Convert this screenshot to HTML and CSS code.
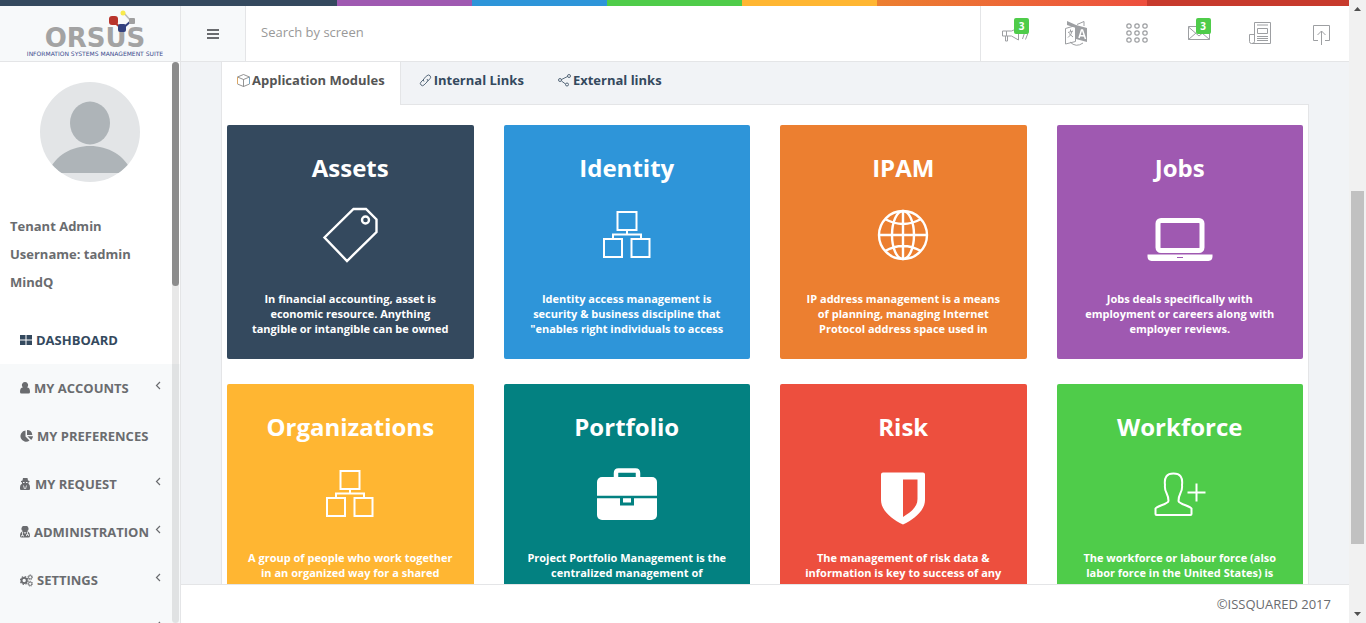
FILE: index.html
```html
<!DOCTYPE html>
<html lang="en">
<head>
<meta charset="utf-8">
<title>Orsus Dashboard</title>
<link rel="stylesheet" href="styles.css">
</head>
<body>
<svg class="defs" aria-hidden="true">
  <symbol id="i-sitemap" viewBox="0 0 50 50"><g fill="none" stroke="currentColor" stroke-width="2"><rect x="15.500" y="2" width="19" height="18"/><rect x="2" y="29" width="18" height="18"/><rect x="29.500" y="29" width="18" height="18"/><path d="M25 20v5M11 29v-4.500h28V29"/></g></symbol>
  <symbol id="i-chevron" viewBox="0 0 6 10"><path d="M5 1L1.500 4.500L5 8" fill="none" stroke="currentColor" stroke-width="1.200"/></symbol>
</svg>
<div class="app">
  <div class="strip"></div>
  <header class="header">
    <a class="logo" href="#" aria-label="Orsus">
      <svg width="148" height="50" viewBox="0 0 148 50">
        <text class="logo-name" x="75" y="38" text-anchor="middle">ORSUS</text>
        <text class="logo-tag" x="75" y="47" text-anchor="middle">INFORMATION SYSTEMS MANAGEMENT SUITE</text>
        <path d="M93 12l9 8" fill="none" stroke="#b9342c" stroke-width="2"/>
        <path d="M102 20l9-8" fill="none" stroke="#33417f" stroke-width="2"/>
        <path d="M103 3l8 9" stroke="#bbb" stroke-width="1.500"/>
        <rect x="89" y="7" width="9" height="9" rx="3" fill="#b9342c"/>
        <rect x="98" y="15" width="8" height="8" rx="2" fill="#33417f"/>
        <rect x="109" y="9" width="6" height="6" rx="1" fill="#a0a0a0"/>
        <circle cx="103" cy="4" r="2.500" fill="#f8ea4c"/>
      </svg>
    </a>
    <button class="menu-toggle" aria-label="Toggle menu">
      <svg width="12" height="10" viewBox="0 0 12 10"><path d="M0 1h12M0 5h12M0 9h12" stroke="currentColor" stroke-width="2"/></svg>
    </button>
    <input class="search" type="text" placeholder="Search by screen" aria-label="Search by screen">
    <nav class="tools">
      <button class="tool" aria-label="Announcements">
        <svg viewBox="0 0 26 26"><g fill="none" stroke="currentColor"><path d="M.5 11h4v5h-4zM4.500 11l5 0 7-3v12l-7-4h-5M3.500 16v5h2v-5M20.500 19l2-6M23.500 19.500l2.500-6.500"/></g></svg>
        <span class="badge">3</span>
      </button>
      <button class="tool" aria-label="Language">
        <svg viewBox="0 0 26 26"><path d="M4 1l9 4v3L4 5zM13 5l11 3v14l-11-3z" fill="currentColor"/><path d="M14 4.500l7-3V6M2.500 8.500l10-3v16l-10 2.500zM7 22q6 6 13 1M5 12.500l5-1.500M7.500 9.500v2M9 11.500q-1 4-4 6M6 13.500l4 3.500" fill="none" stroke="currentColor"/><path d="M16 18l2.500-8h1l3 9M17 15.500l4 .5" fill="none" stroke="#fff" stroke-width="1.500"/></svg>
      </button>
      <button class="tool" aria-label="Apps">
        <svg viewBox="0 0 26 26"><g fill="none" stroke="currentColor" stroke-width="1.200"><circle cx="5" cy="6" r="2.200"/><circle cx="13" cy="6" r="2.200"/><circle cx="21" cy="6" r="2.200"/><circle cx="5" cy="13" r="2.200"/><circle cx="13" cy="13" r="2.200"/><circle cx="21" cy="13" r="2.200"/><circle cx="5" cy="20" r="2.200"/><circle cx="13" cy="20" r="2.200"/><circle cx="21" cy="20" r="2.200"/></g></svg>
      </button>
      <button class="tool tool-mail" aria-label="Messages">
        <svg viewBox="0 0 26 26"><path d="M2.500 6.500h21v13h-21zM2.500 7l10.500 9 10.500-9M2.500 19.500l7.500-6.500M23.500 19.500L16 13" fill="none" stroke="currentColor"/></svg>
        <span class="badge">3</span>
      </button>
      <button class="tool" aria-label="News">
        <svg viewBox="0 0 26 26"><path d="M7.500 2.500h16v21h-19q-2 0-2-2v-7h5zM7.500 14v7.500q0 2-2.500 2M10.500 8.500h10v5h-10zM10 5h11M10 16.500h11M10 18.500h11M10 20.500h11" fill="none" stroke="currentColor"/></svg>
      </button>
      <button class="tool" aria-label="Log out">
        <svg viewBox="0 0 26 26"><path d="M10 20.500H5.500v-15h16v15H17M13.500 25V11M9.500 15l4-4 4 4" fill="none" stroke="currentColor"/></svg>
      </button>
    </nav>
  </header>
  <div class="body">
    <aside class="sidebar">
      <div class="sidebar-content">
        <section class="profile">
          <svg class="avatar" viewBox="0 0 100 100"><defs><clipPath id="round"><circle cx="50" cy="50" r="50"/></clipPath></defs><g clip-path="url(#round)"><path d="M0 0h100v100H0z" fill="#e3e5e7"/><ellipse cx="50" cy="41" rx="20" ry="21.500" fill="#aeb4b8"/><path d="M8 91C15 73 32 64 50 64s35 9 42 27z" fill="#aeb4b8"/></g></svg>
          <p>Tenant Admin</p>
          <p>Username: tadmin</p>
          <p>MindQ</p>
        </section>
        <ul class="menu">
          <li class="active"><a href="#"><svg width="12" height="10" viewBox="0 0 12 10"><path d="M0 0h5.500v4.500H0zM6.500 0H12v4.500H6.500zM0 5.500h5.500V10H0zM6.500 5.500H12V10H6.500z" fill="currentColor"/></svg>DASHBOARD</a></li>
          <li><a href="#"><svg width="10" height="12" viewBox="0 0 10 12"><path d="M5 0a3 3 0 0 1 2 5.300C9 5.500 10 7 10 10q0 1.500-1.500 1.500h-7Q0 11.500 0 10C0 7 1 5.500 3 5.300A3 3 0 0 1 5 0z" fill="currentColor"/></svg>MY ACCOUNTS<svg class="arrow"><use href="#i-chevron"/></svg></a></li>
          <li><a href="#"><svg width="13" height="12" viewBox="0 0 13 12"><path d="M5.500.5v6l4 4A5.600 5.600 0 1 1 5.500.5zM7 0a5.500 5.500 0 0 1 5.300 5H7zM7.500 6.200H13a6 6 0 0 1-1.800 3.800z" fill="currentColor"/></svg>MY PREFERENCES</a></li>
          <li><a href="#"><svg width="11" height="12" viewBox="0 0 11 12"><path d="M3 0h4.500l.5 2.500 1.500.5v1L8.500 4.500v1.200Q10 6.500 10 9v2q0 1-1 1H1q-1 0-1-1V9q0-2.500 2-3.300V4.500L1 4V3l1.500-.5z" fill="currentColor"/><path d="M3 4.500h1.500M6 4.500h1.500" stroke="#f7f9fa"/><path d="M3.500 7.500l1 3.500M6.500 7.500l-1 3.500" stroke="#f7f9fa" stroke-width=".8"/></svg>MY REQUEST<svg class="arrow"><use href="#i-chevron"/></svg></a></li>
          <li><a href="#"><svg width="10" height="12" viewBox="0 0 10 12"><path d="M5 0a2.800 2.800 0 0 1 2 5.200C9 5.500 10 7 10 10q0 1.500-1.500 1.500h-7Q0 11.500 0 10C0 7 1 5.500 3 5.200A2.800 2.800 0 0 1 5 0z" fill="currentColor"/><path d="M2.500 6v3M1.500 10.500V9.500h2v1M4 6l1 1.500L6 6M7.500 6v2M6.500 10V8.500h2V10" fill="none" stroke="#f7f9fa" stroke-width=".8"/></svg>ADMINISTRATION<svg class="arrow"><use href="#i-chevron"/></svg></a></li>
          <li><a href="#"><svg width="13" height="13" viewBox="0 0 14 13"><g fill="none" stroke="currentColor"><circle cx="4.500" cy="6.500" r="2.800" stroke-width="2"/><circle cx="4.500" cy="6.500" r="4.200" stroke-width="1.200" stroke-dasharray="1.650"/><circle cx="11" cy="3" r="1.800"/><circle cx="11" cy="3" r="2.600" stroke-dasharray="1"/><circle cx="11" cy="10" r="1.800"/><circle cx="11" cy="10" r="2.600" stroke-dasharray="1"/></g></svg>SETTINGS<svg class="arrow"><use href="#i-chevron"/></svg></a></li>
          <li><a href="#" aria-label="More"><svg width="12" height="12" viewBox="0 0 12 12"><circle cx="6" cy="6" r="5" fill="currentColor"/></svg><svg class="arrow"><use href="#i-chevron"/></svg></a></li>
        </ul>
      </div>
      <div class="rail"><div class="rail-thumb"></div></div>
    </aside>
    <main class="main">
      <div class="content">
        <div class="tabs" role="tablist">
          <button class="tab selected" role="tab" aria-selected="true"><svg viewBox="0 0 13 13"><path d="M.5 3L6.500.5l6 2.500v7l-6 2.500-6-2.500zM.5 3l6 2.500 6-2.500M6.500 5.500v7" fill="none" stroke="#777" stroke-width=".8"/><path d="M.5 3v7" stroke="#dba765"/><path d="M12.500 10V3" fill="none" stroke="#7aa6c0"/></svg>Application Modules</button>
          <button class="tab" role="tab"><svg viewBox="0 0 13 13"><path d="M5 7.500Q3.500 6 5 4.500L8 1.700q1.500-1.500 3 0t0 3L8.500 7.300M8 5q1.500 1.500 0 3l-3 3q-1.500 1.500-3 0T2 8l2.500-2.500" fill="none" stroke="currentColor" stroke-width=".8"/></svg>Internal Links</button>
          <button class="tab" role="tab"><svg viewBox="0 0 13 13"><g fill="none" stroke="currentColor" stroke-width=".8"><circle cx="2" cy="6" r="1.500"/><circle cx="11" cy="2" r="1.500"/><circle cx="9" cy="10.500" r="1.500"/><path d="M3.500 5.500L9.500 2.500M3.500 7l4 3"/></g></svg>External links</button>
        </div>
        <section class="panel">
          <article class="card navy"><h2>Assets</h2>
            <svg class="icon" viewBox="0 0 70 70"><g fill="none" stroke="#fff" stroke-width="2.400"><path d="M38.500 8H51l10.500 10.500V31L32 60 9.500 36.500z"/><circle cx="50.500" cy="19" r="3.500"/></g></svg>
            <p>In financial accounting, asset is economic resource. Anything tangible or intangible can be owned</p></article>
          <article class="card blue"><h2>Identity</h2><svg class="icon small"><use href="#i-sitemap"/></svg>
            <p>Identity access management is security &amp; business discipline that "enables right individuals to access</p></article>
          <article class="card orange"><h2>IPAM</h2>
            <svg class="icon" viewBox="0 0 70 70"><g fill="none" stroke="#fff" stroke-width="2.400"><circle cx="35" cy="34" r="24"/><ellipse cx="35" cy="34" rx="11" ry="24"/><path d="M35 10v48M11 34h48M17 18q18 10 36 0M17 50q18-10 36 0"/></g></svg>
            <p>IP address management is a means of planning, managing Internet Protocol address space used in</p></article>
          <article class="card purple"><h2>Jobs</h2>
            <svg class="icon" viewBox="0 0 70 70"><rect x="13" y="19.500" width="44" height="30" rx="3" fill="none" stroke="#fff" stroke-width="5"/><path d="M2.500 53.500h65v2q0 4-4 4.500H6.500q-4-.5-4-4.500z" fill="#fff"/><path d="M32 56.500h6" stroke="#9f59b1"/></svg>
            <p>Jobs deals specifically with employment or careers along with employer reviews.</p></article>
          <article class="card yellow"><h2>Organizations</h2><svg class="icon small"><use href="#i-sitemap"/></svg>
            <p>A group of people who work together in an organized way for a shared</p></article>
          <article class="card teal"><h2>Portfolio</h2>
            <svg class="icon" viewBox="0 0 70 70"><path d="M24 18v-5q0-2.500 2.500-2.500h17q2.500 0 2.500 2.500V18" fill="none" stroke="#fff" stroke-width="4.500"/><rect x="5" y="17" width="60" height="43" rx="5" fill="#fff"/><path d="M4 37h62" stroke="#038181" stroke-width="2.500"/><path d="M29.500 37v7h11v-7" fill="none" stroke="#038181" stroke-width="3"/></svg>
            <p>Project Portfolio Management is the centralized management of</p></article>
          <article class="card red"><h2>Risk</h2>
            <svg class="icon" viewBox="0 0 70 70"><path fill-rule="evenodd" d="M15 12.500h40q2 0 2 2V40c0 10-10 19-22 24.500C23 59 13 50 13 40V14.500q0-2 2-2zM35 19.500V57c8-5 14.500-10 14.500-18V19.500z" fill="#fff"/></svg>
            <p>The management of risk data &amp; information is key to success of any</p></article>
          <article class="card green"><h2>Workforce</h2>
            <svg class="icon" viewBox="0 0 70 70"><g fill="none" stroke="#fff" stroke-width="2"><path d="M23.500 41C23 44 12 46 10.500 48.500V54q0 1 1 1h34q1 0 1-1v-5.500C45 46 34 44 33.500 41q0-4 2-8 2-3.500 1.500-8Q38.500 13.500 28.500 13.500T20 25q-.5 4.500 1.500 8 2 4 2 8"/><path d="M51.500 23.500v18M42.500 32.500h18"/></g></svg>
            <p>The workforce or labour force (also labor force in the United States) is</p></article>
        </section>
      </div>
      <footer class="footer">©ISSQUARED 2017</footer>
    </main>
  </div>
</div>
<div class="page-scroll" aria-hidden="true">
  <svg viewBox="0 0 17 17"><path d="M5 11h7L8.500 7z" fill="#505050"/></svg>
  <div class="page-track"><div class="page-thumb"></div></div>
  <svg viewBox="0 0 17 17"><path d="M5 6h7l-3.500 4z" fill="#505050"/></svg>
</div>
</body>
</html>
```

FILE: styles.css
```css
* { box-sizing: border-box; }
body {
  margin: 0;
  height: 100vh;
  display: flex;
  overflow: hidden;
  background: #f1f3f6;
  color: #6a6c6f;
  font: 13px/20px "Open Sans", "Liberation Sans", sans-serif;
}
button { font: inherit; color: inherit; background: none; border: 0; padding: 0; cursor: pointer; }
a { color: inherit; text-decoration: none; }
h2, p, ul { margin: 0; padding: 0; }
ul { list-style: none; }
svg { display: block; flex: none; }
.defs { position: absolute; width: 0; height: 0; }

.app { flex: 1; min-width: 0; display: flex; flex-direction: column; }
.strip {
  height: 6px;
  flex: none;
  background: linear-gradient(to right, #34495e 25%, #9f59b1 25%, #9f59b1 35%, #2e95d9 35%, #2e95d9 45%, #4fcc4a 45%, #4fcc4a 55%, #ffb632 55%, #ffb632 65%, #ec7f30 65%, #ed4f3e 85%, #c73a2c 85%);
}
.header { height: 56px; flex: none; display: flex; background: #fff; border-bottom: 1px solid #e4e5e7; }
.logo { width: 181px; display: flex; justify-content: center; align-items: center; padding-left: 8px; background: #f7f9fa; border-right: 1px solid #e4e5e7; }
.logo-name { font: bold 26px "DejaVu Sans", sans-serif; fill: #a3a3a3; }
.logo-tag { font: 6px "DejaVu Sans", sans-serif; fill: #3a4a8c; }
.menu-toggle { width: 65px; display: flex; align-items: center; justify-content: center; background: #f7f9fa; border-right: 1px solid #e4e5e7; }
.search { flex: 1; min-width: 0; border: 0; outline: 0; padding: 0 15px 3px; font: inherit; color: inherit; background: #fff; }
.search::placeholder { color: #999; }
.tools { width: 369px; display: flex; align-items: center; justify-content: space-between; padding: 0 15px 2px 21px; border-left: 1px solid #e4e5e7; color: #9d9fa2; }
.tool { position: relative; }
.tool svg { width: 26px; height: 26px; }
.badge { position: absolute; top: -2px; left: 12px; width: 15px; height: 16px; border-radius: 2px; background: #4fcc4a; color: #fff; font-size: 10px; font-weight: 700; line-height: 16px; text-align: center; }
.tool-mail .badge { left: 10px; }

.body { flex: 1; min-height: 0; display: flex; }
.sidebar { position: relative; width: 181px; flex: none; overflow: hidden; background: #f7f9fa; border-right: 1px solid #e4e5e7; }
.profile { background: #fff; padding: 20px 10px; font-weight: 700; line-height: 28px; }
.avatar { width: 100px; height: 100px; margin: 0 auto 30px; }
.menu a { display: flex; align-items: center; gap: 4px; height: 48px; padding: 0 19px 0 20px; font-weight: 700; white-space: nowrap; }
.menu .active { background: #fff; color: #34495e; }
.menu .arrow { width: 6px; height: 10px; margin-left: auto; margin-bottom: 4px; }
.rail { position: absolute; top: 0; right: 1px; bottom: 0; width: 7px; border-radius: 7px; background: rgba(0, 0, 0, .09); }
.rail-thumb { height: 40%; border-radius: 7px; background: #8c8c8c; }

.main { flex: 1; min-width: 0; display: flex; flex-direction: column; }
.content { flex: 1; min-height: 0; overflow: hidden; padding: 0 40px; }
.tabs { display: flex; align-items: flex-start; gap: 2px; }
.tab { display: flex; align-items: center; gap: 2px; padding: 8px 15px 14px; border: 1px solid transparent; border-width: 0 1px; font-weight: 700; color: #34495e; }
.tab svg { width: 13px; height: 13px; }
.tab.selected { position: relative; padding-bottom: 15px; margin-bottom: -1px; background: #fff; border-color: #e4e5e7; color: #555; }
.panel { display: grid; grid-template-columns: repeat(4, 1fr); gap: 25px 30px; padding: 20px 5px; background: #fff; border: 1px solid #e4e5e7; }
.card { display: flex; flex-direction: column; align-items: center; padding: 30px 20px 23px; border-radius: 2px; color: #fff; text-align: center; }
.card h2 { font-size: 24px; line-height: 26px; font-weight: 700; }
.card p { min-height: 45px; font-size: 11px; line-height: 15px; font-weight: 700; }
.icon { width: 70px; height: 70px; margin: 20px 0; }
.icon.small { width: 50px; height: 50px; margin: 29px 0 31px; }
.navy { background: #34495e; }
.blue { background: #2e95d9; }
.orange { background: #ec7f30; }
.purple { background: #9f59b1; }
.yellow { background: #ffb632; }
.teal { background: #038181; }
.red { background: #ed4f3e; }
.green { background: #4fcc4a; }
.footer { flex: none; padding: 9px 18px; background: #fff; border-top: 1px solid #e4e5e7; text-align: right; }

.page-scroll { width: 17px; flex: none; display: flex; flex-direction: column; background: #f1f1f1; }
.page-scroll svg { width: 17px; height: 17px; }
.page-track { flex: 1; display: flex; flex-direction: column; padding: 0 2px; }
.page-track::before { content: ""; height: 29.5%; }
.page-thumb { height: 60%; background: #c1c1c1; }
```
